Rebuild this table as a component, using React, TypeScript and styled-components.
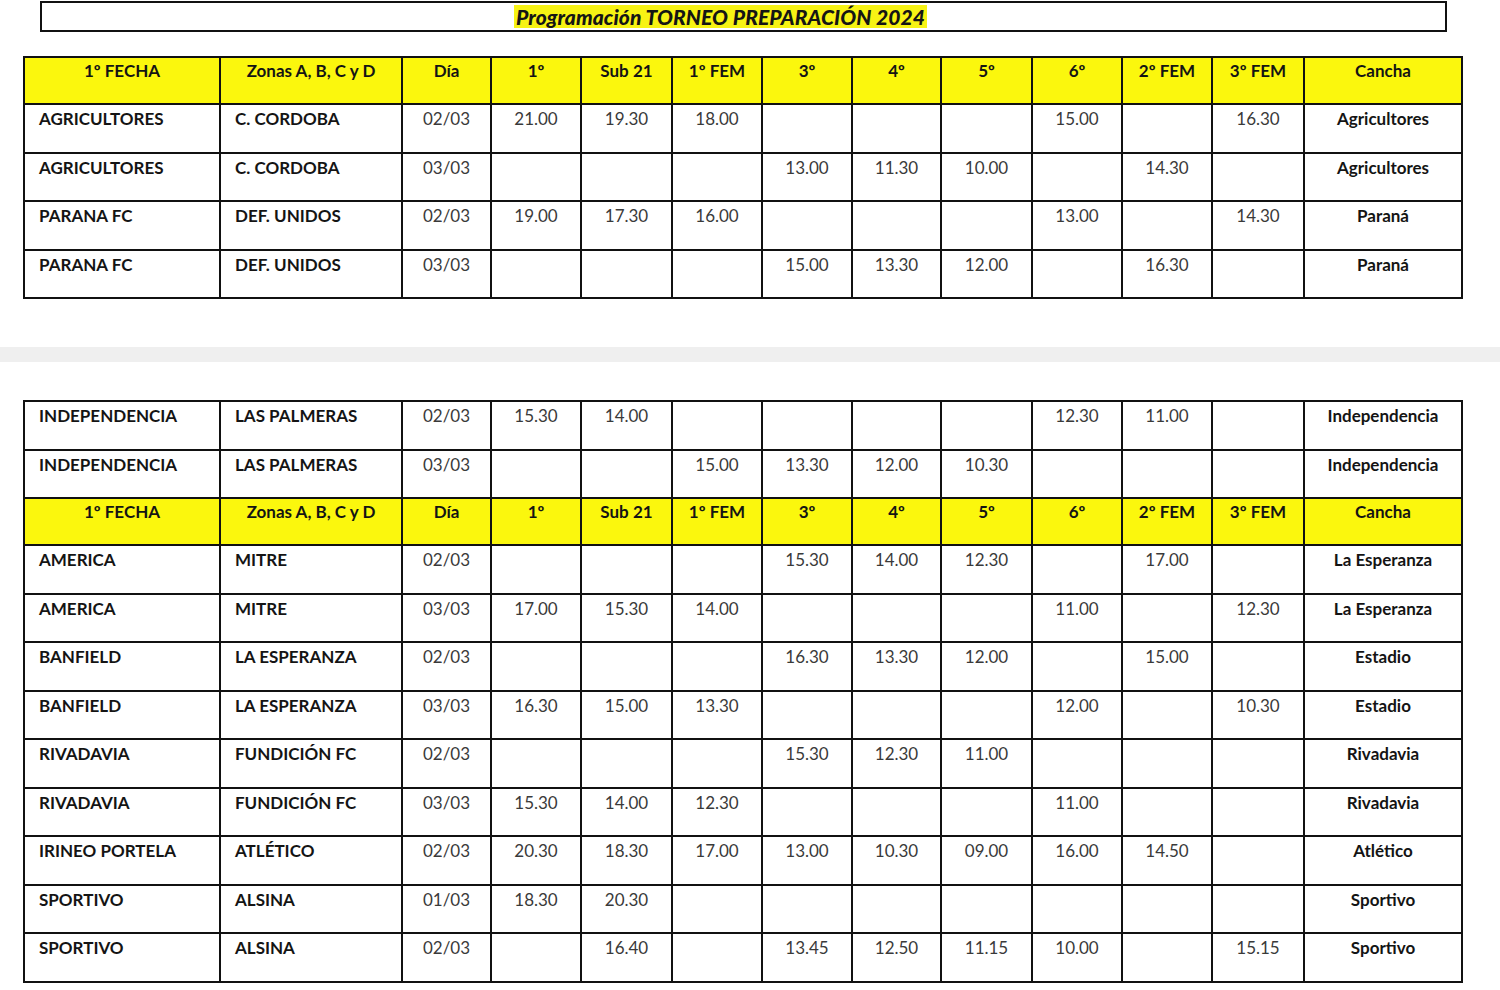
import React from 'react'
import styled, { createGlobalStyle } from 'styled-components'

type Row = {
  home: string
  away: string
  day: string
  times: string[]
  field: string
}

const GlobalStyle = createGlobalStyle`
  html, body {
    margin: 0;
    padding: 0;
    background: #ffffff;
  }
  body {
    font-family: Lato, "Open Sans", "Liberation Sans", sans-serif;
    color: #1c1c1c;
  }
`

const Page = styled.div`
  width: 1500px;
  height: 990px;
  overflow: hidden;
  background: #fff;
  padding-top: 1px;
  box-sizing: border-box;
`

const TitleBox = styled.div`
  margin-left: 40px;
  width: 1407px;
  height: 31px;
  box-sizing: border-box;
  border: 2px solid #111;
  display: flex;
  justify-content: center;
  align-items: center;
`

const TitleText = styled.span`
  background: #f7f314;
  font-weight: 900;
  font-style: italic;
  font-size: 21px;
  line-height: 23px;
  padding: 0 2px;
  color: #151515;
  margin-right: 46px;
  letter-spacing: 0.1px;
`

const Section = styled.div<{ $top: number }>`
  padding-top: ${(p) => p.$top}px;
  padding-left: 23px;
`

const Band = styled.div`
  margin-top: 48px;
  height: 15px;
  background: #efefef;
`

const Table = styled.table`
  border-collapse: collapse;
  table-layout: fixed;
  width: 1438px;
  border: 2.5px solid #111;
`

const HeadRow = styled.tr`
  background: #fbf70d;
  height: 47px;
`

const BodyRow = styled.tr`
  height: 48.5px;
`

const Cell = styled.td<{ $align?: 'left' | 'center'; $bold?: boolean; $head?: boolean }>`
  border: 2px solid #111;
  vertical-align: top;
  padding: ${(p) => (p.$head ? '3px' : '4px')} 0 0 ${(p) => (p.$align === 'left' ? '14px' : '0')};
  text-align: ${(p) => p.$align ?? 'center'};
  font-size: 17px;
  line-height: 20px;
  font-weight: ${(p) => (p.$bold ? 700 : 400)};
  color: ${(p) => (p.$bold ? '#141414' : '#3a3a3a')};
  white-space: nowrap;
  overflow: hidden;
`

const widths = [196, 182, 89, 90, 91, 90, 90, 89, 91, 90, 90, 92, 158]
const heads = ['1º FECHA', 'Zonas A, B, C y D', 'Día', '1º', 'Sub 21', '1º FEM', '3º', '4º', '5º', '6º', '2º FEM', '3º FEM', 'Cancha']

const r = (home: string, away: string, day: string, times: string[], field: string): Row => ({
  home,
  away,
  day,
  times,
  field,
})

const firstRows: Row[] = [
  r('AGRICULTORES', 'C. CORDOBA', '02/03', ['21.00', '19.30', '18.00', '', '', '', '15.00', '', '16.30'], 'Agricultores'),
  r('AGRICULTORES', 'C. CORDOBA', '03/03', ['', '', '', '13.00', '11.30', '10.00', '', '14.30', ''], 'Agricultores'),
  r('PARANA FC', 'DEF. UNIDOS', '02/03', ['19.00', '17.30', '16.00', '', '', '', '13.00', '', '14.30'], 'Paraná'),
  r('PARANA FC', 'DEF. UNIDOS', '03/03', ['', '', '', '15.00', '13.30', '12.00', '', '16.30', ''], 'Paraná'),
]

const secondTop: Row[] = [
  r('INDEPENDENCIA', 'LAS PALMERAS', '02/03', ['15.30', '14.00', '', '', '', '', '12.30', '11.00', ''], 'Independencia'),
  r('INDEPENDENCIA', 'LAS PALMERAS', '03/03', ['', '', '15.00', '13.30', '12.00', '10.30', '', '', ''], 'Independencia'),
]

const secondRows: Row[] = [
  r('AMERICA', 'MITRE', '02/03', ['', '', '', '15.30', '14.00', '12.30', '', '17.00', ''], 'La Esperanza'),
  r('AMERICA', 'MITRE', '03/03', ['17.00', '15.30', '14.00', '', '', '', '11.00', '', '12.30'], 'La Esperanza'),
  r('BANFIELD', 'LA ESPERANZA', '02/03', ['', '', '', '16.30', '13.30', '12.00', '', '15.00', ''], 'Estadio'),
  r('BANFIELD', 'LA ESPERANZA', '03/03', ['16.30', '15.00', '13.30', '', '', '', '12.00', '', '10.30'], 'Estadio'),
  r('RIVADAVIA', 'FUNDICIÓN FC', '02/03', ['', '', '', '15.30', '12.30', '11.00', '', '', ''], 'Rivadavia'),
  r('RIVADAVIA', 'FUNDICIÓN FC', '03/03', ['15.30', '14.00', '12.30', '', '', '', '11.00', '', ''], 'Rivadavia'),
  r('IRINEO PORTELA', 'ATLÉTICO', '02/03', ['20.30', '18.30', '17.00', '13.00', '10.30', '09.00', '16.00', '14.50', ''], 'Atlético'),
  r('SPORTIVO', 'ALSINA', '01/03', ['18.30', '20.30', '', '', '', '', '', '', ''], 'Sportivo'),
  r('SPORTIVO', 'ALSINA', '02/03', ['', '16.40', '', '13.45', '12.50', '11.15', '10.00', '', '15.15'], 'Sportivo'),
]

const Header = () => (
  <HeadRow>
    {heads.map((h, i) => (
      <Cell key={i} $head $bold>
        {h}
      </Cell>
    ))}
  </HeadRow>
)

const MatchRow: React.FC<{ row: Row }> = ({ row }) => (
  <BodyRow>
    <Cell $align="left" $bold>
      {row.home}
    </Cell>
    <Cell $align="left" $bold>
      {row.away}
    </Cell>
    <Cell>{row.day}</Cell>
    {row.times.map((t, i) => (
      <Cell key={i}>{t}</Cell>
    ))}
    <Cell $bold>{row.field}</Cell>
  </BodyRow>
)

const Cols = () => (
  <colgroup>
    {widths.map((w, i) => (
      <col key={i} style={{ width: w }} />
    ))}
  </colgroup>
)

export default function App() {
  return (
    <Page>
      <GlobalStyle />
      <TitleBox>
        <TitleText>Programación TORNEO PREPARACIÓN 2024</TitleText>
      </TitleBox>
      <Section $top={24}>
        <Table>
          <Cols />
          <tbody>
            <Header />
            {firstRows.map((row, i) => (
              <MatchRow key={i} row={row} />
            ))}
          </tbody>
        </Table>
      </Section>
      <Band />
      <Section $top={38}>
        <Table>
          <Cols />
          <tbody>
            {secondTop.map((row, i) => (
              <MatchRow key={i} row={row} />
            ))}
            <Header />
            {secondRows.map((row, i) => (
              <MatchRow key={i} row={row} />
            ))}
          </tbody>
        </Table>
      </Section>
    </Page>
  )
}
